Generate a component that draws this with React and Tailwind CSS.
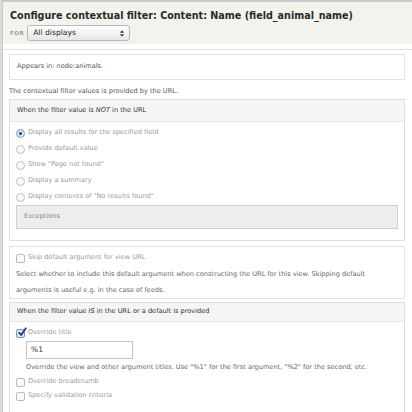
import React from "react";

const font = { fontFamily: '"DejaVu Sans", Verdana, sans-serif' };

const Radio = ({ checked, label }) => (
    <div className="flex items-center h-4 gap-[3px]">
        <span className={`w-[9px] h-[9px] rounded-full border flex items-center justify-center ${checked ? 'border-[#7a9cc4] bg-[#dbe8f7]' : 'border-[#bbb] bg-[#fafafa]'}`}>
            {checked && <span className="w-[3px] h-[3px] rounded-full bg-[#1d3f6e]" />}
        </span>
        <span className="text-[#9a9a9a]">{label}</span>
    </div>
);

const Check = ({ checked, label, tight }) => (
    <div className={`flex items-center gap-[3px] ${tight ? 'h-[14px]' : 'h-4'}`}>
        <span className={`relative w-[9px] h-[9px] rounded-[2px] border ${checked ? 'border-[#7a9cc4] bg-[#dbe8f7]' : 'border-[#bbb] bg-[#fafafa]'}`}>
            {checked && (
                <svg viewBox="0 0 12 12" className="absolute -top-[3px] left-0 w-[10px] h-[10px]">
                    <path d="M2 6.5 L5 9.5 L11 1" fill="none" stroke="#1f3d6b" strokeWidth="2.2" />
                </svg>
            )}
        </span>
        <span className="text-[#9a9a9a]">{label}</span>
    </div>
);

export default function App() {
    return (
        <div className="w-[412px] h-[412px] overflow-hidden bg-white flex text-[6.6px] text-[#555]" style={font}>
            <div className="w-[3px] shrink-0 bg-[#dcdcdc] border-r border-[#c8c8c8]" />
            <div className="flex-1 border-t-2 border-[#c9c9c9]">
                {/* header */}
                <div className="h-[42px] bg-[#f3f3ed] px-[7px] pt-[7px]">
                    <h1 className="text-[#2a2a2a] font-bold text-[9.6px] leading-[14px]">
                        Configure contextual filter: Content: Name (field_animal_name)
                    </h1>
                    <div className="flex items-center gap-[3px] mt-[2px]">
                        <span className="text-[5.5px] font-bold tracking-[0.5px] text-[#999]">FOR</span>
                        <div className="w-[103px] h-[16px] rounded-[3px] border border-[#b8b8b8] bg-gradient-to-b from-[#ffffff] to-[#e6e6e6] flex items-center justify-between px-[5px] text-[7.6px] text-[#222]">
                            <span>All displays</span>
                            <svg viewBox="0 0 6 10" className="w-[4px] h-[7px]">
                                <path d="M3 0 L6 4 L0 4 Z M0 6 L6 6 L3 10 Z" fill="#333" />
                            </svg>
                        </div>
                    </div>
                </div>
                <div className="h-[5px]" />
                <div className="border-t border-[#e2e2e2]" />

                <div className="pl-[6px] pr-[7px] pt-[4px]">
                    <div className="h-[26px] border border-[#e3e3e3] flex items-center px-[7px]">
                        Appears in: node:animals.
                    </div>
                    <p className="h-[19px] pt-[6px] leading-[10px]">The contextual filter values is provided by the URL.</p>

                    {/* fieldset 1 */}
                    <div className="border border-[#dedede]">
                        <div className="h-[22px] bg-[#f5f5f5] border-b border-[#e6e6e6] flex items-center px-[7px] text-[#333]">
                            When the filter value is&nbsp;<i>NOT</i>&nbsp;in the URL
                        </div>
                        <div className="px-[6px] pt-[3px] pb-[11px]">
                            <Radio checked label="Display all results for the specified field" />
                            <Radio label="Provide default value" />
                            <Radio label='Show "Page not found"' />
                            <Radio label="Display a summary" />
                            <Radio label='Display contents of "No results found"' />
                            <div className="h-[24px] border border-[#cfcfcf] bg-[#ededed] flex items-center px-[7px] text-[#888]">
                                Exceptions
                            </div>
                        </div>
                    </div>

                    {/* skip box */}
                    <div className="mt-[5px] border border-[#e3e3e3] px-[6px] pt-[3px]">
                        <Check label="Skip default argument for view URL" />
                        <p className="leading-4 text-[#666]">
                            Select whether to include this default argument when constructing the URL for this view. Skipping default arguments is useful e.g. in the case of feeds.
                        </p>
                    </div>

                    {/* fieldset 2 */}
                    <div className="mt-[3px] border border-[#dedede] h-[120px]">
                        <div className="h-[19px] bg-[#f5f5f5] border-b border-[#e6e6e6] flex items-center px-[7px] text-[#333]">
                            When the filter value&nbsp;<i>IS</i>&nbsp;in the URL or a default is provided
                        </div>
                        <div className="px-[6px] pt-[3px]">
                            <Check checked label="Override title" />
                            <div className="pl-[10px]">
                                <div className="w-[107px] h-[18px] border border-[#c4c4c4] flex items-center px-[4px] text-[7.6px] text-[#333]">
                                    %1
                                </div>
                                <p className="leading-4 text-[#666]">
                                    Override the view and other argument titles. Use "%1" for the first argument, "%2" for the second, etc.
                                </p>
                            </div>
                            <Check tight label="Override breadcrumb" />
                            <Check tight label="Specify validation criteria" />
                        </div>
                    </div>
                </div>
            </div>
        </div>
    );
}
